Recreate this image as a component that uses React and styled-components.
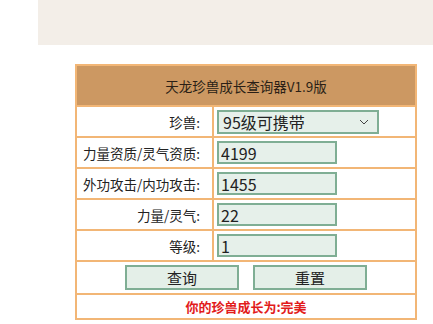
import React from 'react'
import styled, { createGlobalStyle } from 'styled-components'

const Global = createGlobalStyle`
  body {
    margin: 0;
    background: #fff;
    font-family: "Noto Sans CJK SC", "Noto Sans", sans-serif;
  }
`

const Band = styled.div`
  margin-left: 38px;
  height: 45px;
  background: #f3eee8;
`

const Panel = styled.table`
  margin: 19px 0 0 75px;
  width: 340px;
  border-collapse: collapse;
  table-layout: fixed;
  td, th {
    border: 2px solid #f2b676;
    padding: 0;
  }
`

const Col = styled.col`
  width: ${p => p.$w}px;
`

const Title = styled.th`
  height: 39px;
  background: #cc9862;
  color: #2a1f16;
  font-size: 13.5px;
  font-weight: normal;
`

const Label = styled.td`
  height: 29px;
  text-align: right;
  padding-right: 12px !important;
  font-size: 13.5px;
  white-space: nowrap;
  color: #222;
`

const Field = styled.td`
  padding-left: 3px !important;
`

const Input = styled.input`
  box-sizing: border-box;
  display: block;
  width: 120px;
  height: 23px;
  margin: 0;
  padding: 0 2px;
  border: 2px solid #7fae94;
  background: #e6f0ea;
  font-family: inherit;
  font-size: 16px;
  color: #222;
  outline: none;
`

const SelectBox = styled.div`
  box-sizing: border-box;
  width: 162px;
  height: 24px;
  display: flex;
  align-items: center;
  justify-content: space-between;
  padding: 0 8px 0 4px;
  border: 2px solid #7fae94;
  background: #e6f0ea;
  font-size: 16px;
  color: #222;
`

const ButtonRow = styled.td`
  height: 31px;
  text-align: center;
`

const Buttons = styled.div`
  display: flex;
  justify-content: center;
  gap: 14px;
`

const Button = styled.button`
  box-sizing: border-box;
  width: 114px;
  height: 25px;
  margin: 0;
  border: 2px solid #7fae94;
  background: #e4efe8;
  font-family: inherit;
  font-size: 15px;
  color: #222;
  padding: 0;
`

const Result = styled.td`
  height: 23px;
  text-align: center;
  color: #e21b1b;
  font-weight: bold;
  font-size: 13px;
`

const rows = [
  ['力量资质/灵气资质:', '4199'],
  ['外功攻击/内功攻击:', '1455'],
  ['力量/灵气:', '22'],
  ['等级:', '1']
]

export default function App() {
  return (
    <>
      <Global />
      <Band />
      <Panel>
        <colgroup>
          <Col $w={137} />
          <Col $w={203} />
        </colgroup>
        <tbody>
          <tr>
            <Title colSpan={2}>天龙珍兽成长查询器V1.9版</Title>
          </tr>
          <tr>
            <Label>珍兽:</Label>
            <Field>
              <SelectBox>
                <span>95级可携带</span>
                <svg width="10" height="6" viewBox="0 0 10 6">
                  <path d="M1 1l4 4 4-4" fill="none" stroke="#444" strokeWidth="1" />
                </svg>
              </SelectBox>
            </Field>
          </tr>
          {rows.map(([label, value]) => (
            <tr key={label}>
              <Label>{label}</Label>
              <Field>
                <Input defaultValue={value} />
              </Field>
            </tr>
          ))}
          <tr>
            <ButtonRow colSpan={2}>
              <Buttons>
                <Button>查询</Button>
                <Button>重置</Button>
              </Buttons>
            </ButtonRow>
          </tr>
          <tr>
            <Result colSpan={2}>你的珍兽成长为:完美</Result>
          </tr>
        </tbody>
      </Panel>
    </>
  )
}
